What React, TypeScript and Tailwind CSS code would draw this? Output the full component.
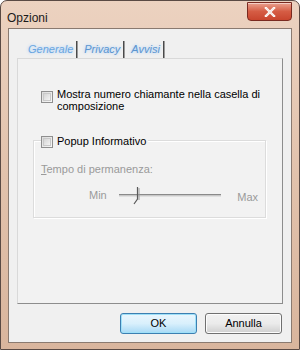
import React from "react";

const ui = { fontFamily: '"Liberation Sans", "DejaVu Sans", sans-serif' };

function Check({ label }: { label?: React.ReactNode }) {
  return (
    <span className="flex items-start gap-[4px]">
      <span className="mt-[4px] w-[12px] h-[12px] shrink-0 border border-[#8f8f8f] bg-gradient-to-br from-[#dcdcdc] to-[#f8f8f8] p-[1px]">
        <span className="block w-full h-full border border-[#c9c9c9] bg-gradient-to-br from-[#d5d5d5] to-[#f4f4f4]" />
      </span>
      {label}
    </span>
  );
}

function Tab({ label, active }: { label: string; active?: boolean }) {
  return (
    <div className="flex items-center h-[18px]">
      <span
        className={
          "italic text-[11px] pl-[6px] pr-[3px] " +
          (active ? "text-[#6aa6e0]" : "text-[#5c95cf]")
        }
        style={{ textShadow: "0 0 3px rgba(150,200,255,0.9)" }}
      >
        {label}
      </span>
      <span className="w-[2px] h-[17px] bg-[#4a4a4a] border-r border-[#9a9a9a]" />
    </div>
  );
}

function Thumb() {
  return (
    <svg width="11" height="20" viewBox="0 0 11 20" className="shrink-0">
      <path d="M5.5 1 V13 L2 18" fill="none" stroke="#5a5a5a" strokeWidth="1.2" />
      <path d="M7 2 V14" fill="none" stroke="#9a9a9a" strokeWidth="1" />
    </svg>
  );
}

export default function App() {
  return (
    <div
      className="w-[300px] h-[350px] flex flex-col rounded-t-[7px] border border-[#5a4a44] bg-gradient-to-b from-[#ecd2c0] via-[#e2c2ac] to-[#d9b59d] text-[11px] text-black"
      style={ui}
    >
      <div className="h-[27px] flex items-start justify-between pl-[6px] pr-[7px]">
        <span className="mt-[8px] text-[12px] text-[#1a1a1a]">Opzioni</span>
        <div className="mt-[1px] w-[45px] h-[19px] rounded-b-[4px] border border-[#7a2a20] bg-gradient-to-b from-[#e9a08e] via-[#d55c44] to-[#c8452e] flex items-center justify-center shadow-[inset_0_1px_0_rgba(255,255,255,0.5)]">
          <svg width="12" height="10" viewBox="0 0 12 10">
            <path d="M2 1 L10 9 M10 1 L2 9" stroke="#ffffff" strokeWidth="2.4" strokeLinecap="square" />
            <path d="M2 1 L10 9 M10 1 L2 9" stroke="#f4e8e4" strokeWidth="1.6" />
          </svg>
        </div>
      </div>
      <div className="flex-1 mx-[7px] mb-[6px] border border-[#8a7a70] bg-[#f0f0f0] flex flex-col pt-[11px] px-[8px]">
        <div className="flex items-center pl-[5px]">
          <Tab label="Generale" active />
          <Tab label="Privacy" />
          <Tab label="Avvisi" />
        </div>
        <div className="h-[246px] border border-[#d9d9d9] border-r-[#8d8d8d] border-b-[#8d8d8d] bg-[#f2f2f2] flex flex-col pt-[28px] pl-[23px] pr-[10px]">
          <div className="leading-[12px]">
            <Check
              label={
                <span className="pt-[1px]">
                  Mostra numero chiamante nella casella di composizione
                </span>
              }
            />
          </div>
          <div className="mt-[28px] -ml-[8px] mr-[6px] border border-[#dcdcdc] shadow-[inset_1px_1px_0_#ffffff,1px_1px_0_#ffffff] h-[78px] flex flex-col px-[7px]">
            <div className="-mt-[9px] self-start bg-[#f2f2f2] pr-[2px] leading-[14px]">
              <Check label={<span className="pt-[2px]">Popup Informativo</span>} />
            </div>
            <div className="mt-[13px] text-[#9a9a9a]">
              <span className="underline">T</span>empo di permanenza:
            </div>
            <div className="mt-[8px] flex items-center text-[#9a9a9a] text-[11px]">
              <span className="ml-[48px] w-[30px]">Min</span>
              <div className="relative w-[104px] h-[20px] flex items-center">
                <div className="w-full h-[3px] border-t border-[#8a8a8a] border-b border-b-[#e0e0e0] bg-[#c8c8c8]" />
                <div className="absolute left-[13px] top-0">
                  <Thumb />
                </div>
              </div>
              <span className="ml-[16px] mt-[3px]">Max</span>
            </div>
          </div>
        </div>
        <div className="flex justify-end gap-[8px] mt-[9px] pr-[1px]">
          <button className="w-[77px] h-[21px] rounded-[3px] border border-[#3c7fb1] bg-gradient-to-b from-[#eaf6fd] via-[#d9f0fc] to-[#a7d9f5] shadow-[inset_0_0_0_1px_#9fe0f8] text-[11px]">
            OK
          </button>
          <button className="w-[77px] h-[21px] rounded-[3px] border border-[#707070] bg-gradient-to-b from-[#f2f2f2] via-[#ebebeb] to-[#cfcfcf] shadow-[inset_0_0_0_1px_#fcfcfc] text-[11px]">
            Annulla
          </button>
        </div>
      </div>
    </div>
  );
}
